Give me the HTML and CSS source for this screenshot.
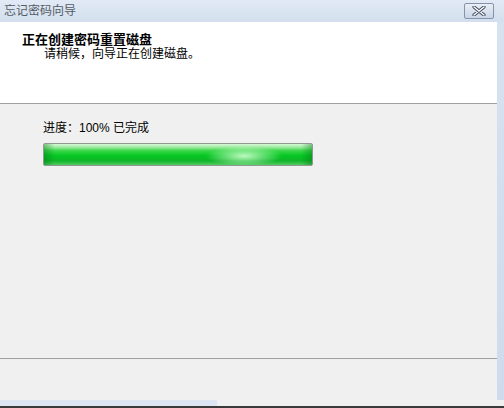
FILE: index.html
```html
<!DOCTYPE html>
<html lang="zh-CN">
<head>
    <meta charset="UTF-8">
    <title>忘记密码向导</title>
    <link rel="stylesheet" href="styles.css">
</head>
<body>
    <div id="wizard">
        <div id="titlebar">
            <div id="title">忘记密码向导</div>
            <div id="close">
                <svg width="16" height="10" viewBox="0 0 16 10">
                    <path d="M3 1 L13 9 M13 1 L3 9" stroke="#3c4658" stroke-width="3.2" stroke-linecap="round"/>
                    <path d="M3 1 L13 9 M13 1 L3 9" stroke="#ffffff" stroke-width="1.4" stroke-linecap="round"/>
                </svg>
            </div>
        </div>
        <div id="frame">
            <div id="content">
                <div id="header">
                    <div id="maintext">正在创建密码重置磁盘</div>
                    <div id="secondtext">请稍候，向导正在创建磁盘。</div>
                </div>
                <div id="main">
                    <div id="progress-label">进度：100% 已完成</div>
                    <div id="progress">
                        <div class="bar" style="width: 100%"></div>
                    </div>
                </div>
                <div id="footer"></div>
            </div>
            <div id="edge"></div>
        </div>
        <div id="bottom">
            <div id="bottom-blue"></div>
        </div>
    </div>
</body>
</html>
```

FILE: styles.css
```css
body {
    margin: 0;
    font-family: "Liberation Sans", "Noto Sans CJK SC", sans-serif;
    font-size: 12px;
    background-color: #f0f0f0;
}

#wizard {
    width: 504px;
    height: 408px;
    display: flex;
    flex-direction: column;
    overflow: hidden;
}

/* title bar */
#titlebar {
    height: 22px;
    display: flex;
    justify-content: space-between;
    align-items: flex-start;
    background: linear-gradient(#e1eaf5, #d3dfee);
    flex-shrink: 0;
}

#title {
    padding: 3px 0 0 4px;
    color: #555b64;
    font-size: 12px;
    line-height: 16px;
}

#close {
    margin: 3px 10px 0 0;
    width: 28px;
    height: 14px;
    border: 1px solid #8593ab;
    border-radius: 2px;
    background: linear-gradient(#e9eef6, #c9d5e6);
    display: flex;
    justify-content: center;
    align-items: center;
}

#frame {
    flex: 1;
    display: flex;
}

#content {
    width: 497px;
    display: flex;
    flex-direction: column;
}

#edge {
    flex: 1;
    background: linear-gradient(#d6e2f0, #cddbec);
}

/* white header */
#header {
    background-color: #ffffff;
    border-bottom: 1px solid #a0a0a0;
    padding-left: 22px;
    padding-top: 10px;
    box-sizing: border-box;
    height: 82px;
}

#maintext {
    font-weight: bold;
    font-size: 13px;
    color: #000;
    line-height: 15px;
}

#secondtext {
    padding-left: 22px;
    color: #000;
    line-height: 15px;
}

/* progress area */
#main {
    padding: 16px 0 0 43px;
    box-sizing: border-box;
    border-bottom: 1px solid #a0a0a0;
    height: 255px;
}

#progress-label {
    color: #000;
    line-height: 16px;
    margin-bottom: 7px;
}

#progress {
    width: 268px;
    height: 21px;
    border: 1px solid #8e9a8e;
    border-radius: 2px;
    background-color: #e6e6e6;
}

.bar {
    height: 100%;
    background:
        radial-gradient(ellipse 38px 10px at 200px 12px, rgba(210, 255, 210, 0.9), rgba(210, 255, 210, 0) 100%),
        linear-gradient(90deg, rgba(0, 110, 20, 0.4), rgba(0, 0, 0, 0) 4%, rgba(0, 0, 0, 0) 96%, rgba(0, 110, 20, 0.4)),
        linear-gradient(#d8f8d8 0%, #9eec9f 15%, #3ad64a 32%, #06c722 55%, #0fb52a 80%, #55cb62 100%);
}

#footer {
    height: 41px;
}

/* bottom frame */
#bottom {
    height: 8px;
    flex-shrink: 0;
    border-bottom: 2px solid #3a3a3a;
    box-sizing: border-box;
}

#bottom-blue {
    width: 217px;
    height: 6px;
    background-color: #dbe6f2;
}
```
